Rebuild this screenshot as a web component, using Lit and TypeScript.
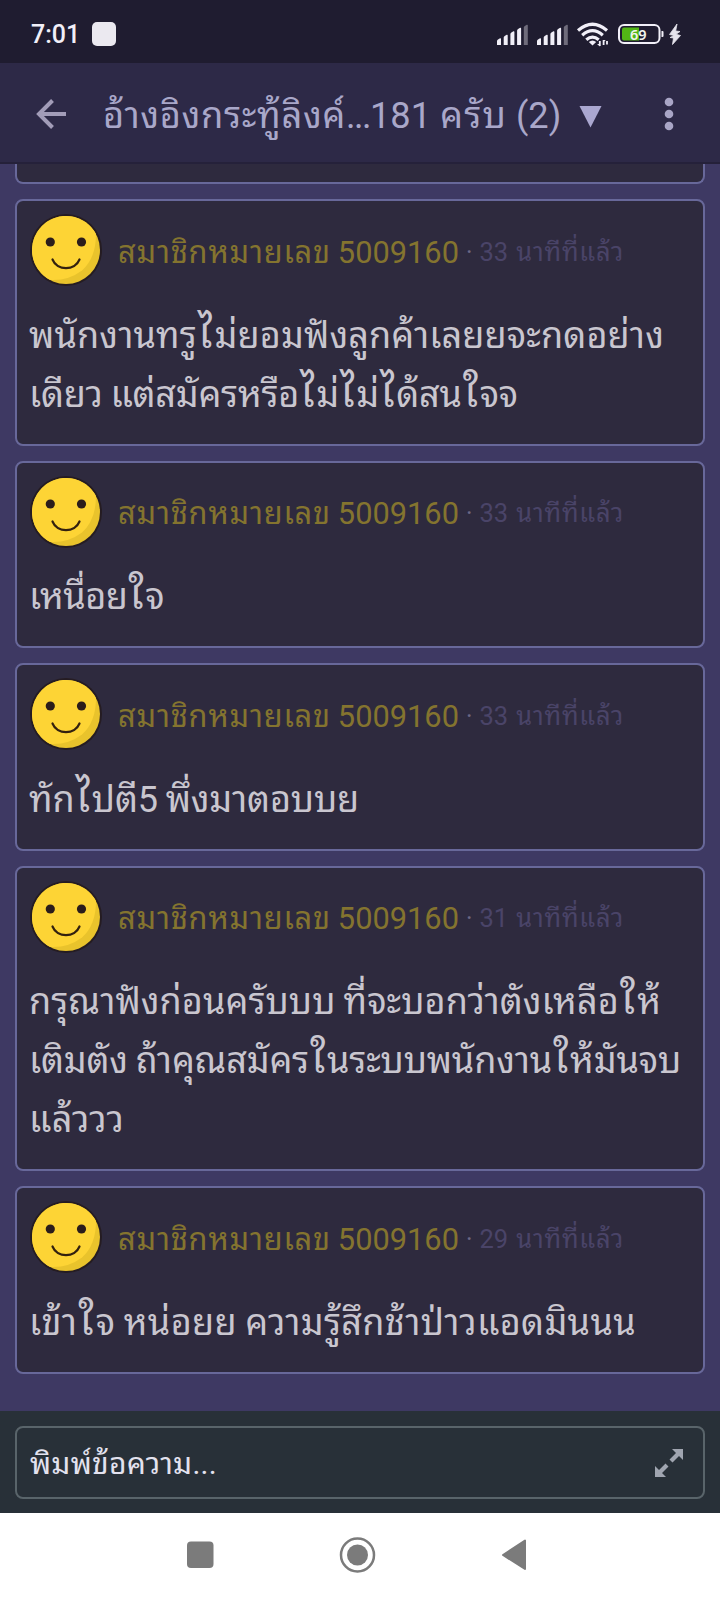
import { LitElement, html, svg, css } from "lit";
import { customElement, property, state } from "lit/decorators.js";

interface Line {
  text: string;
  width: number;
}

interface Comment {
  number: string;
  minutes: string;
  lines: Line[];
}

const comments: Comment[] = [
  { number: "5009160", minutes: "33", lines: [{ text: "พนักงานทรูไม่ยอมฟังลูกค้าเลยยจะกดอย่าง", width: 635 }, { text: "เดียว แต่สมัครหรือไม่ไม่ได้สนใจจ", width: 489 }] },
  { number: "5009160", minutes: "33", lines: [{ text: "เหนื่อยใจ", width: 135 }] },
  { number: "5009160", minutes: "33", lines: [{ text: "ทักไปตี5 พึ่งมาตอบบย", width: 330 }] },
  { number: "5009160", minutes: "31", lines: [{ text: "กรุณาฟังก่อนครับบบ ที่จะบอกว่าตังเหลือให้", width: 632 }, { text: "เติมตัง ถ้าคุณสมัครในระบบพนักงานให้มันจบ", width: 652 }, { text: "แล้ววว", width: 95 }] },
  { number: "5009160", minutes: "29", lines: [{ text: "เข้าใจ หน่อยย ความรู้สึกช้าป่าวแอดมินนน", width: 607 }] },
];

/** One line of text whose tracking is adjusted to fill a given width. */
@customElement("fit-text")
class FitText extends LitElement {
  @property() text = "";
  @property({ type: Number }) width = 0;
  @state() private tracking = 0;
  static styles = css`
    :host { display: inline-block; white-space: pre; }
    .run { display: inline-block; word-spacing: -1px; }
    .tall { font-size: 1.12em; line-height: 0; padding: 0 .05em 0 .03em; }
  `;
  async firstUpdated() {
    await document.fonts.ready;
    const run = this.renderRoot.querySelector(".run") as HTMLElement;
    const clusters = [...new (Intl as any).Segmenter("th", { granularity: "grapheme" }).segment(this.text)].length;
    this.tracking = (this.width - run.getBoundingClientRect().width) / clusters;
  }
  render() {
    const parts = this.text.split(/([ไใ])/).filter(Boolean);
    return html`<span class="run" style=${`letter-spacing:${this.tracking}px`}>${parts.map((p) => (/^[ไใ]$/.test(p) ? html`<span class="tall">${p}</span>` : p))}</span>`;
  }
}

@customElement("status-bar")
class StatusBar extends LitElement {
  static styles = css`
    :host { display: flex; align-items: flex-start; height: 63px; box-sizing: border-box; padding: 20px 36px 0 31px; background: #1f1c30; color: #f1eff8; }
    .clock { font: 500 25px/30px Roboto, sans-serif; width: 61px; white-space: nowrap; }
    .app { width: 24px; height: 24px; margin-top: 2px; border-radius: 5px; background: #ebe9f0; }
    .icons { margin-left: auto; width: 188px; height: 28px; }
    .pct { font: 600 14.5px "Noto Sans", sans-serif; fill: #f1f5ee; }
  `;
  bars(x: number) {
    const tops = [18, 14.5, 11, 7.5, 4.5];
    return tops.map((t, i) => svg`<path d=${`M${x + i * 6.7} ${t + 3}q0-1 1-1.5l2-1.2q1-.5 1 .8V25h-4z`} fill="#f1eff8" opacity=${i === 4 ? 0.38 : 1}/>`);
  }
  render() {
    return html`
      <span class="clock">7:01</span><span class="app"></span>
      <svg class="icons" viewBox="0 0 188 28">
        ${this.bars(1)}${this.bars(41)}
        <g fill="none" stroke="#f1eff8" stroke-width="3.2">
          <path d="M82 10.500Q96.500 -2 111 10.500"/>
          <path d="M86.200 15.200Q96.500 6.200 106.800 15.200"/>
          <path d="M90.300 19.700Q96.500 14.400 102.700 19.700"/>
        </g>
        <path d="M92.800 22Q96.500 19 100.200 22l-3.700 3.600z" fill="#f1eff8"/>
        <path d="M103.800 21v5M107.600 20v5M111 21v3.500" stroke="#f1eff8" stroke-width="1.800"/>
        <path d="M101 24h3v2.500zM107 20h2.800L107 22.500z" fill="#f1eff8"/>
        <rect x="123" y="5" width="40.500" height="18" rx="5" fill="none" stroke="#f1eff8" stroke-width="2"/>
        <path d="M128 7.500h15v13h-15q-2 0-2-2v-9q0-2 2-2z" fill="#52b615"/>
        <path d="M165.500 11h1q1 0 1 1v4q0 1-1 1h-1z" fill="#f1eff8"/>
        <text class="pct" x="134" y="19.500">69</text>
        <path d="M181 4L173.500 14.500l4.500 1-4 2 3.500.5L176.500 24.500 184.500 15.500l-4.500-1.200 4-2.800-4.300-.5z" fill="#e5e3ec" stroke="#e5e3ec" stroke-width=".8"/>
      </svg>`;
  }
}

@customElement("smile-avatar")
class SmileAvatar extends LitElement {
  static styles = css`:host { display: block; width: 72px; height: 72px; } .face { display: block; width: 72px; height: 72px; }`;
  render() {
    return html`<svg class="face" viewBox="0 0 72 72">
      <circle cx="36" cy="36" r="36" fill="#251c22"/>
      <circle cx="36" cy="36" r="34" fill="#e9c32c"/>
      <path d="M66 20A34 34 0 1 0 20 66Q38 67 52 56.500 66 44 66 20z" fill="#fdd435"/>
      <circle cx="20.300" cy="28" r="4.600" fill="#2b1d1b"/><circle cx="51.500" cy="28" r="4.600" fill="#2b1d1b"/>
      <path d="M22.500 45.500C27 57 45 57 49.500 45.500" fill="none" stroke="#33210f" stroke-width="2.200" stroke-linecap="round"/>
    </svg>`;
  }
}

@customElement("comment-card")
class CommentCard extends LitElement {
  @property({ attribute: false }) comment!: Comment;
  static styles = css`
    :host { display: block; box-sizing: border-box; border: 2px solid #68689a; border-radius: 8px; background: #2e2a3e; padding: 12px 13px 19.300px 12px; }
    .head { display: flex; align-items: center; height: 74px; white-space: nowrap; line-height: 40px; padding-left: 1px; }
    .meta { display: flex; padding-top: 5px; }
    .author { margin-left: 16px; width: 341px; display: flex; justify-content: space-between; color: #84742f; font-size: 30.800px; }
    .dot { margin-left: 7px; width: 13.500px; color: #6d6885; font-size: 25px; }
    .age { display: flex; gap: 8px; color: #4a4468; font-size: 25.500px; line-height: 38px; }
    .body { margin-top: 19.500px; color: #c9c6cf; font-size: 36px; line-height: 58.800px; white-space: nowrap; }
    .line { display: block; }
  `;
  render() {
    const c = this.comment;
    return html`
      <div class="head"><smile-avatar></smile-avatar>
        <div class="meta">
          <span class="author"><fit-text text="สมาชิกหมายเลข" width="213"></fit-text><span>${c.number}</span></span>
          <span class="dot">·</span>
          <span class="age"><span>${c.minutes}</span><fit-text text="นาทีที่แล้ว" width="108"></fit-text></span>
        </div></div>
      <div class="body">${c.lines.map((l) => html`<fit-text class="line" .text=${l.text} .width=${l.width}></fit-text>`)}</div>`;
  }
}

@customElement("app-root")
class AppRoot extends LitElement {
  static styles = css`
    :host { display: flex; flex-direction: column; width: 720px; height: 1600px; overflow: hidden; background: #3e3963; font-family: Roboto, "Noto Sans Thai Looped", "Noto Looped Thai", "Droid Sans Thai", Loma, Waree, Garuda, "Noto Sans Thai", sans-serif; }
    .bar { flex: none; display: flex; align-items: center; height: 101.300px; box-sizing: border-box; border-bottom: 2px solid #25213a; background: #2d2947; color: #a9a7c9; padding: 3px 34px 0 35px; }
    .back { width: 32px; height: 32px; flex: none; }
    .title { margin-left: 36px; padding-top: 4px; font-size: 36.200px; line-height: 50px; white-space: nowrap; width: 461px; }
    .tri { width: 23px; height: 24px; margin-left: 15px; margin-top: 6px; }
    .more { width: 10px; height: 34px; margin-left: auto; margin-right: 12px; }
    .feed { flex: 1; min-height: 0; display: flex; flex-direction: column; gap: 15px; padding: 0 15px; overflow: hidden; }
    .previous { height: 20px; flex: none; box-sizing: border-box; border: 2px solid #68689a; border-top: 0; border-radius: 0 0 8px 8px; background: #2e2a3e; }
    comment-card { flex: none; }
    .composer { flex: none; height: 102px; box-sizing: border-box; padding: 15px; background: #283038; }
    .field { display: flex; align-items: center; justify-content: space-between; box-sizing: border-box; height: 73px; border: 2px solid #59646a; border-radius: 8px; padding: 0 19px 0 13px; color: #e3e2ef; font-size: 30px; }
    .hint { padding-bottom: 4px; }
    .grow { width: 30px; height: 30px; }
    .nav { flex: none; height: 87px; background: #fff; }
    .keys { display: block; width: 720px; height: 87px; }
  `;
  render() {
    return html`
      <status-bar></status-bar>
      <header class="bar">
        <svg class="back" viewBox="0 0 32 32" fill="none" stroke="#a29cb8" stroke-width="4"><path d="M31 16H4M17.500 2.500L4 16l13.500 13.500"/></svg>
        <span class="title"><fit-text text="อ้างอิงกระทู้ลิงค์" width="243"></fit-text><fit-text text="..." width="24"></fit-text>181 <fit-text text="ครับ" width="67"></fit-text> (2)</span>
        <svg class="tri" viewBox="0 0 23 24"><path d="M.5 1h22L11.500 22.500z" fill="#aaa7d0"/></svg>
        <svg class="more" viewBox="0 0 10 34" fill="#a9a5c6"><circle cx="5" cy="5" r="4.300"/><circle cx="5" cy="17" r="4.300"/><circle cx="5" cy="29" r="4.300"/></svg>
      </header>
      <main class="feed">
        <div class="previous"></div>
        ${comments.map((c) => html`<comment-card .comment=${c}></comment-card>`)}
      </main>
      <div class="composer"><div class="field"><fit-text class="hint" text="พิมพ์ข้อความ..." width="187"></fit-text>
        <svg class="grow" viewBox="0 0 30 30"><path d="M18 1H29v11l-4-4-6.500 6.500-3-3 6.500-6.500zM1 18l4 4 6.500-6.500 3 3L8 25l4 4H1z" fill="#a0a5b0"/></svg></div></div>
      <nav class="nav"><svg class="keys" viewBox="0 0 720 87" fill="#7b7b7b">
        <rect x="187" y="28.500" width="26.500" height="26.500" rx="4"/>
        <circle cx="357.500" cy="42" r="16.500" fill="none" stroke="#7b7b7b" stroke-width="2.500"/><circle cx="357.500" cy="42" r="10.500"/>
        <path d="M525 27.500v28.500L503 42z" stroke="#7b7b7b" stroke-width="2" stroke-linejoin="round"/>
      </svg></nav>`;
  }
}
